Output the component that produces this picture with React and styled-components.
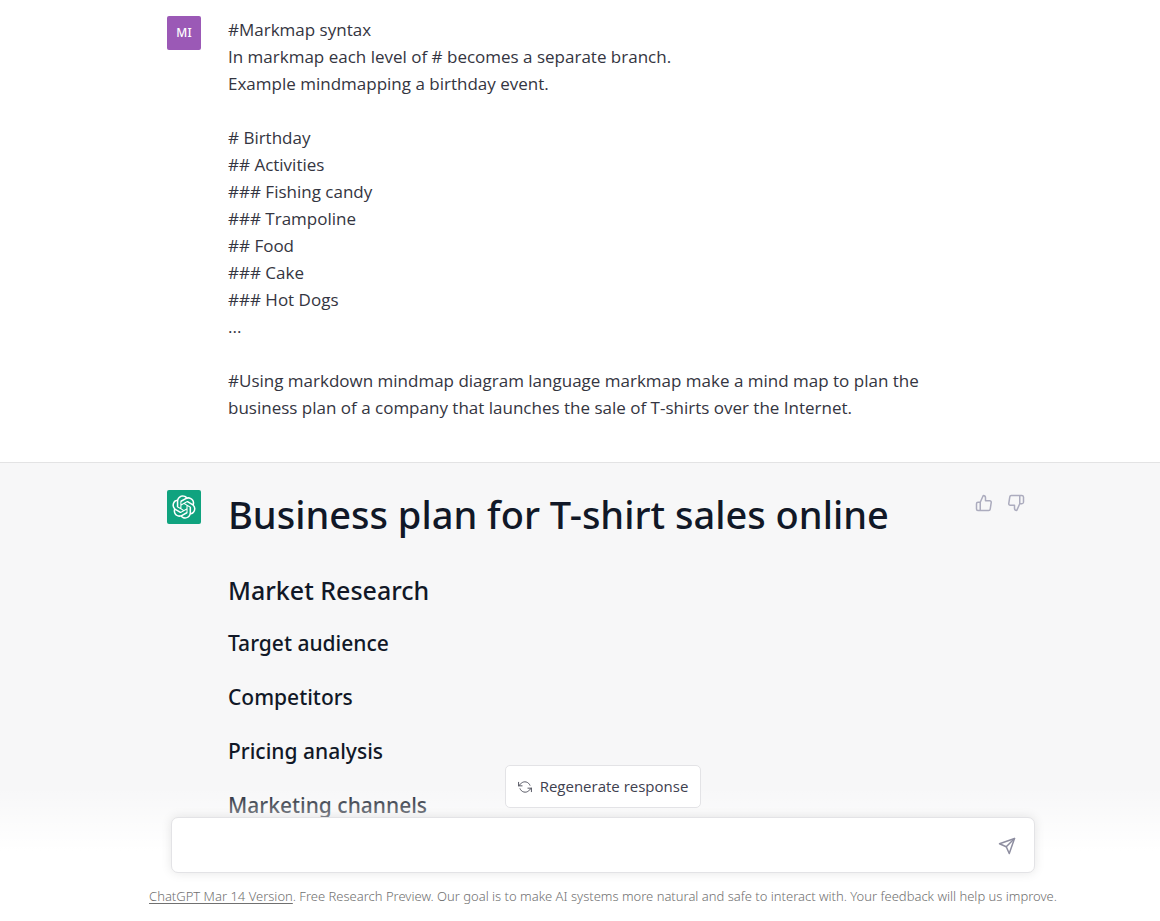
import React from 'react'
import styled, { createGlobalStyle } from 'styled-components'
import { FiRefreshCcw, FiSend, FiThumbsDown, FiThumbsUp } from 'react-icons/fi'

const prompt = `#Markmap syntax
In markmap each level of # becomes a separate branch.
Example mindmapping a birthday event.

# Birthday
## Activities
### Fishing candy
### Trampoline
## Food
### Cake
### Hot Dogs
...

#Using markdown mindmap diagram language markmap make a mind map to plan the business plan of a company that launches the sale of T-shirts over the Internet.`

const topics = [
  'Target audience',
  'Competitors',
  'Pricing analysis',
  'Marketing channels',
]

const Logo = () => (
  <svg width="24" height="24" viewBox="0 0 41 41" fill="none" aria-hidden="true">
    <path
      fill="currentColor"
      d="M37.5324 16.8707C37.9808 15.5241 38.1363 14.0974 37.9886 12.6859C37.8409 11.2744 37.3934 9.91076 36.676 8.68622C35.6126 6.83404 33.9882 5.3676 32.0373 4.4985C30.0864 3.62941 27.9098 3.40259 25.8215 3.85078C24.8796 2.7893 23.7219 1.94125 22.4257 1.36341C21.1295 0.785575 19.7249 0.491269 18.3058 0.500197C16.1708 0.495044 14.0893 1.16803 12.3614 2.42214C10.6335 3.67624 9.34853 5.44666 8.6917 7.47815C7.30085 7.76286 5.98686 8.3414 4.8377 9.17505C3.68854 10.0087 2.73073 11.0782 2.02839 12.312C0.956464 14.1591 0.498905 16.2988 0.721698 18.4228C0.944492 20.5467 1.83612 22.5449 3.268 24.1293C2.81966 25.4759 2.66413 26.9026 2.81182 28.3141C2.95951 29.7256 3.40701 31.0892 4.12437 32.3138C5.18791 34.1659 6.8123 35.6322 8.76321 36.5013C10.7141 37.3704 12.8907 37.5973 14.9789 37.1492C15.9208 38.2107 17.0786 39.0587 18.3747 39.6366C19.6709 40.2144 21.0755 40.5087 22.4946 40.4998C24.6307 40.5054 26.7133 39.8321 28.4418 38.5772C30.1704 37.3223 31.4556 35.5506 32.1119 33.5179C33.5027 33.2332 34.8167 32.6547 35.9659 31.821C37.115 30.9874 38.0728 29.9178 38.7752 28.684C39.8458 26.8371 40.3023 24.6979 40.0789 22.5748C39.8556 20.4517 38.9639 18.4544 37.5324 16.8707ZM22.4978 37.8849C20.7443 37.8874 19.0459 37.2733 17.6994 36.1501C17.7601 36.117 17.8666 36.0586 17.936 36.0161L25.9004 31.4156C26.1003 31.3019 26.2663 31.137 26.3813 30.9378C26.4964 30.7386 26.5563 30.5124 26.5549 30.2825V19.0542L29.9213 20.998C29.9389 21.0068 29.9541 21.0198 29.9656 21.0359C29.977 21.052 29.9842 21.0707 29.9867 21.0902V30.3889C29.9842 32.375 29.1946 34.2791 27.7909 35.6841C26.3872 37.0892 24.4838 37.8806 22.4978 37.8849ZM6.39227 31.0064C5.51397 29.4888 5.19742 27.7107 5.49804 25.9832C5.55718 26.0187 5.66048 26.0818 5.73461 26.1244L13.699 30.7248C13.8975 30.8408 14.1233 30.902 14.3532 30.902C14.583 30.902 14.8088 30.8408 15.0073 30.7248L24.731 25.1103V28.9979C24.7321 29.0177 24.7283 29.0376 24.7199 29.0556C24.7115 29.0736 24.6988 29.0893 24.6829 29.1012L16.6317 33.7497C14.9096 34.7416 12.8643 35.0097 10.9447 34.4954C9.02506 33.9811 7.38785 32.7263 6.39227 31.0064ZM4.29707 13.6194C5.17156 12.0998 6.55279 10.9364 8.19885 10.3327C8.19885 10.4013 8.19491 10.5228 8.19491 10.6071V19.808C8.19351 20.0378 8.25334 20.2638 8.36823 20.4629C8.48312 20.6619 8.64893 20.8267 8.84863 20.9404L18.5723 26.5542L15.206 28.4979C15.1894 28.5089 15.1703 28.5155 15.1505 28.5173C15.1307 28.5191 15.1107 28.516 15.0924 28.5082L7.04046 23.8557C5.32135 22.8601 4.06716 21.2235 3.55289 19.3046C3.03862 17.3858 3.30624 15.3413 4.29707 13.6194ZM31.955 20.0556L22.2312 14.4411L25.5976 12.4981C25.6142 12.4872 25.6333 12.4805 25.6531 12.4787C25.6729 12.4769 25.6928 12.4801 25.7111 12.4879L33.7631 17.1364C34.9967 17.849 36.0017 18.8982 36.6606 20.1613C37.3194 21.4244 37.6047 22.849 37.4832 24.2684C37.3617 25.6878 36.8382 27.0432 35.9743 28.1759C35.1103 29.3086 33.9415 30.1717 32.6047 30.6641C32.6047 30.5947 32.6047 30.4733 32.6047 30.3889V21.188C32.6066 20.9586 32.5474 20.7328 32.4332 20.5338C32.319 20.3348 32.154 20.1698 31.955 20.0556ZM35.3055 15.0128C35.2464 14.9765 35.1431 14.9142 35.069 14.8717L27.1045 10.2712C26.906 10.1554 26.6803 10.0943 26.4504 10.0943C26.2206 10.0943 25.9948 10.1554 25.7963 10.2712L16.0726 15.8858V11.9982C16.0715 11.9783 16.0753 11.9585 16.0837 11.9405C16.0921 11.9225 16.1048 11.9068 16.1207 11.8949L24.1719 7.25025C25.4053 6.53903 26.8158 6.19376 28.2383 6.25482C29.6608 6.31589 31.0364 6.78077 32.2044 7.59508C33.3723 8.40939 34.2842 9.53945 34.8334 10.8531C35.3826 12.1667 35.5464 13.6095 35.3055 15.0128ZM14.2424 21.9419L10.8752 19.9981C10.8576 19.9893 10.8423 19.9763 10.8309 19.9602C10.8195 19.9441 10.8122 19.9254 10.8098 19.9058V10.6071C10.8107 9.18295 11.2173 7.78848 11.9819 6.58696C12.7466 5.38544 13.8377 4.42659 15.1275 3.82264C16.4173 3.21869 17.8524 2.99464 19.2649 3.1767C20.6775 3.35876 22.0089 3.93941 23.1034 4.85067C23.0427 4.88379 22.937 4.94215 22.8668 4.98473L14.9024 9.58517C14.7025 9.69878 14.5366 9.86356 14.4215 10.0626C14.3065 10.2616 14.2466 10.4877 14.2479 10.7175L14.2424 21.9419ZM16.071 17.9991L20.4018 15.4978L24.7325 17.9975V22.9985L20.4018 25.4983L16.071 22.9985V17.9991Z"
    />
  </svg>
)

export default () => {
  return (
    <Page>
      <GlobalStyle />
      <Message>
        <Row>
          <Avatar $color="#9b59b6">MI</Avatar>
          <Prompt>{prompt}</Prompt>
        </Row>
      </Message>
      <Message $reply>
        <Row>
          <Avatar $color="#10a37f"><Logo /></Avatar>
          <Answer>
            <Title>Business plan for T-shirt sales online</Title>
            <Section>Market Research</Section>
            {topics.map(topic => <Topic key={topic}>{topic}</Topic>)}
          </Answer>
          <Votes>
            <IconButton aria-label="Good response"><FiThumbsUp size={18} /></IconButton>
            <IconButton aria-label="Bad response"><FiThumbsDown size={18} /></IconButton>
          </Votes>
        </Row>
      </Message>
      <Footer>
        <Regenerate>
          <FiRefreshCcw size={14} />
          Regenerate response
        </Regenerate>
        <Composer>
          <Input rows={1} aria-label="Message" />
          <IconButton $dark aria-label="Send message"><FiSend size={18} /></IconButton>
        </Composer>
        <Notice>
          <NoticeLink href="#release-notes">ChatGPT Mar 14 Version</NoticeLink>
          . Free Research Preview. Our goal is to make AI systems more natural and safe to interact with. Your feedback will help us improve.
        </Notice>
      </Footer>
    </Page>
  )
}

const GlobalStyle = createGlobalStyle`
  * {
    box-sizing: border-box;
  }

  body {
    margin: 0;
    background-color: #fff;
    color: #343541;
    font-family: 'Open Sans', 'Noto Sans', sans-serif;
    font-size: 17px;
    line-height: 27px;
  }

  button,
  textarea {
    font: inherit;
  }
`

const Page = styled.main`
  height: 100vh;
  overflow: hidden;
  position: relative;
`

const Message = styled.section`
  background-color: ${props => props.$reply ? '#f7f7f8' : '#fff'};
  border-bottom: 1px solid #e3e3e4;
  padding: ${props => props.$reply ? '27px 0 180px 46px' : '16px 0 41px 46px'};
`

const Row = styled.div`
  display: flex;
  gap: 27px;
  margin: 0 auto;
  max-width: 872px;
`

const Avatar = styled.div`
  align-items: center;
  background-color: ${props => props.$color};
  border-radius: 2px;
  color: #fff;
  display: flex;
  flex: none;
  font-family: 'Noto Sans', 'Open Sans', sans-serif;
  font-size: 12px;
  font-weight: 500;
  height: 34px;
  justify-content: center;
  line-height: 18px;
  width: 34px;
`

const Prompt = styled.div`
  flex: 1;
  padding-right: 84px;
  white-space: pre-wrap;
`

const Answer = styled.div`
  color: #111827;
  flex: 1;
  font-family: 'Noto Sans', 'Open Sans', sans-serif;
`

const Title = styled.h1`
  font-size: 38px;
  font-weight: 500;
  line-height: 48px;
  margin: 0 0 34px;
`

const Section = styled.h2`
  font-size: 25px;
  font-weight: 500;
  line-height: 36px;
  margin: 0 0 18px;
`

const Topic = styled.h3`
  font-size: 21px;
  font-weight: 500;
  line-height: 34px;
  margin: 0 0 20px;
`

const Votes = styled.div`
  display: flex;
  gap: 4px;
  padding-right: 9px;
`

const IconButton = styled.button`
  align-items: center;
  align-self: ${props => props.$dark ? 'flex-end' : 'flex-start'};
  background: none;
  border: 0;
  color: ${props => props.$dark ? '#8e8ea0' : '#acacbe'};
  cursor: pointer;
  display: flex;
  padding: 4px 5px;
`

const Footer = styled.footer`
  align-items: center;
  background-image: linear-gradient(180deg, rgba(255,255,255,0) 14%, #fff 55%);
  bottom: 0;
  display: flex;
  flex-direction: column;
  left: 0;
  padding: 0 0 16px 46px;
  position: absolute;
  right: 0;
`

const Regenerate = styled.button`
  align-items: center;
  background-color: #fff;
  border: 1px solid #e3e3e6;
  border-radius: 5px;
  color: #40414f;
  cursor: pointer;
  display: flex;
  font-size: 15px;
  gap: 8px;
  margin-bottom: 9px;
  padding: 7px 12px;

  svg {
    stroke-width: 1.5;
  }
`

const Composer = styled.form`
  align-items: center;
  background-color: #fff;
  border: 1px solid #e3e3e6;
  border-radius: 7px;
  box-shadow: 0 0 11px rgba(0,0,0,.1);
  display: flex;
  max-width: 864px;
  padding: 13px;
  width: 100%;
`

const Input = styled.textarea`
  background: none;
  border: 0;
  flex: 1;
  height: 28px;
  outline: 0;
  padding: 0 5px;
  resize: none;
`

const Notice = styled.p`
  color: #707070;
  font-family: 'Noto Sans', 'Open Sans', sans-serif;
  font-size: 13px;
  font-weight: 300;
  line-height: 18px;
  margin: 14px 0 0;
`

const NoticeLink = styled.a`
  color: inherit;
  text-decoration: underline;
  text-underline-offset: 2px;
`
